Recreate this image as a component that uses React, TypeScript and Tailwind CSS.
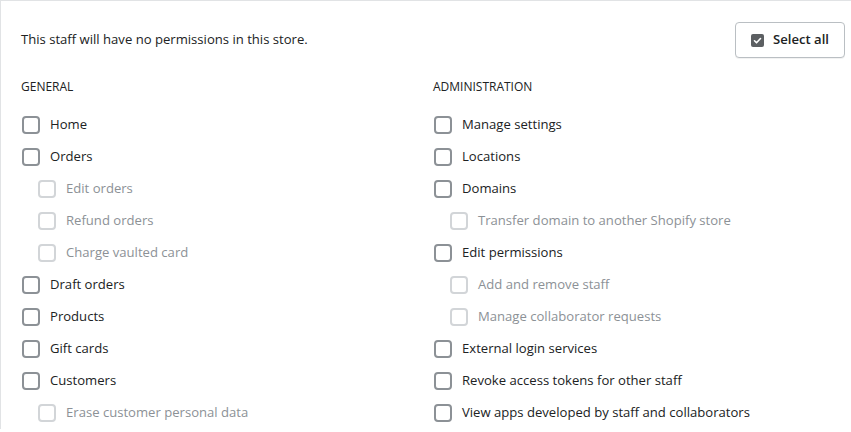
const general = [
  { label: "Home" },
  { label: "Orders" },
  { label: "Edit orders", sub: true },
  { label: "Refund orders", sub: true },
  { label: "Charge vaulted card", sub: true },
  { label: "Draft orders" },
  { label: "Products" },
  { label: "Gift cards" },
  { label: "Customers" },
  { label: "Erase customer personal data", sub: true },
];

const administration = [
  { label: "Manage settings" },
  { label: "Locations" },
  { label: "Domains" },
  { label: "Transfer domain to another Shopify store", sub: true },
  { label: "Edit permissions" },
  { label: "Add and remove staff", sub: true },
  { label: "Manage collaborator requests", sub: true },
  { label: "External login services" },
  { label: "Revoke access tokens for other staff" },
  { label: "View apps developed by staff and collaborators" },
];

type Item = { label: string; sub?: boolean };

function Row({ item }: { item: Item }) {
  return (
    <label className={`flex h-8 items-center gap-[10px] pl-px ${item.sub ? "ml-4" : ""}`}>
      <span
        className={`h-[18px] w-[18px] shrink-0 rounded-[4px] border-2 bg-white ${
          item.sub ? "border-[#d2d5d8]" : "border-[#8c9196]"
        }`}
      />
      <span className={item.sub ? "text-[#8c9196]" : "text-[#202223]"}>{item.label}</span>
    </label>
  );
}

function Section({ title, items }: { title: string; items: Item[] }) {
  return (
    <div>
      <h3 className="text-[12px] font-medium uppercase leading-4 text-[#202223]">{title}</h3>
      <div className="mt-[14px]">
        {items.map((item) => (
          <Row key={item.label} item={item} />
        ))}
      </div>
    </div>
  );
}

export default function App() {
  return (
    <div className="h-[432px] w-[851px] overflow-hidden bg-white font-['Open_Sans',sans-serif] text-[13.1px] text-[#202223]">
      <div className="border-l border-t border-[#e1e3e5] pl-[20px] pr-[6px]">
        <div className="flex items-center justify-between pt-[21px]">
          <p>This staff will have no permissions in this store.</p>
          <button className="flex h-[36px] w-[110px] items-center justify-center gap-[9px] rounded-[4px] border border-[#babfc3] bg-white font-semibold shadow-[0_1px_0_rgba(0,0,0,0.05)]">
            <svg width="13" height="13" viewBox="0 0 13 13">
              <rect width="13" height="13" rx="2" fill="#5c5f62" />
              <path d="M3.5 6.8l2 2 4-4.3" fill="none" stroke="#fff" strokeWidth="1.6" strokeLinecap="round" strokeLinejoin="round" />
            </svg>
            Select all
          </button>
        </div>
        <div className="mt-[21px] grid grid-cols-[412px_1fr]">
          <Section title="General" items={general} />
          <Section title="Administration" items={administration} />
        </div>
      </div>
    </div>
  );
}
